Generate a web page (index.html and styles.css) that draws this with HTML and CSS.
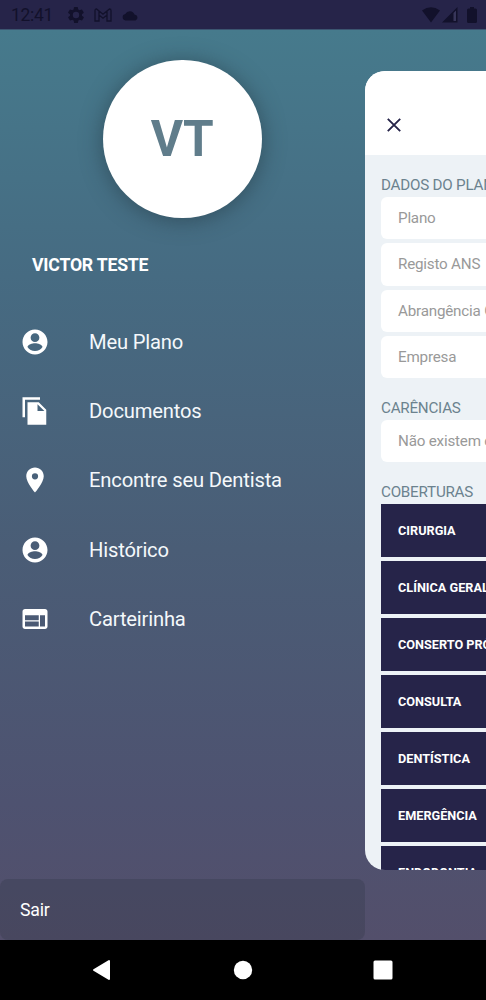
FILE: index.html
```html
<!DOCTYPE html>
<html lang="pt-BR">
<head>
<meta charset="utf-8">
<title>Meu Plano</title>
<link rel="stylesheet" href="styles.css">
</head>
<body>
<div class="phone">
  <header class="status">
    <span class="clock">12:41</span>
    <svg class="status-gear" viewBox="2 2 20 20"><path fill-rule="evenodd" d="M19.4 13a7.8 7.8 0 0 0 0-2l2.1-1.6c.2-.2.2-.4.1-.7l-2-3.4c-.1-.2-.4-.3-.6-.2l-2.5 1a7.500 7.500 0 0 0-1.700-1l-.4-2.600a.5.5 0 0 0-.5-.5h-4a.5.5 0 0 0-.5.5L9 5.100c-.6.200-1.200.6-1.700 1l-2.500-1c-.2-.1-.5 0-.6.2l-2 3.400c-.1.3-.1.5.1.7L4.500 11a7.800 7.800 0 0 0 0 2l-2.100 1.600c-.2.2-.2.400-.1.700l2 3.400c.1.200.4.300.6.200l2.500-1c.5.400 1.100.700 1.700 1l.4 2.600c0 .3.2.5.5.5h4c.3 0 .5-.2.500-.5l.4-2.600c.6-.3 1.200-.6 1.700-1l2.500 1c.2.100.5 0 .6-.2l2-3.400c.1-.2.1-.5-.1-.7zM12 16a4 4 0 1 1 0-8 4 4 0 0 1 0 8z"/></svg>
    <svg class="status-mail" viewBox="0 0 18 14"><path d="M1 13V2.500Q1 1 2.500 1L9 6.200 15.500 1Q17 1 17 2.500V13H13V7L9 10.200 5 7V13ZM5 3v4M13 3v4"/></svg>
    <svg class="status-cloud" viewBox="0 0 17 11"><path d="M3.500 10.500A3.300 3.300 0 0 1 3.300 4 5 5 0 0 1 12.500 4.500 3.100 3.100 0 0 1 13.500 10.500Z"/></svg>
    <div class="signals">
      <svg width="18" height="16" viewBox="0 0 18 16"><path d="M0 3.500Q9-2.800 18 3.500L9 15.500Z"/></svg>
      <svg width="16" height="16" viewBox="0 0 16 16"><path d="M0 15.500 15.500 0V15.500Z"/><path class="weak" d="M11.500 6 14 3.500V14H11.500Z"/></svg>
      <svg class="battery" width="10" height="16" viewBox="0 0 10 16"><path d="M3 0H7V1.500H8.500Q10 1.500 10 3V14.500Q10 16 8.500 16H1.500Q0 16 0 14.500V3Q0 1.500 1.500 1.500H3Z"/></svg>
    </div>
  </header>

  <main class="screen">
    <aside class="drawer">
      <div class="avatar">VT</div>
      <h1 class="name">VICTOR TESTE</h1>
      <nav class="menu">
        <a class="item"><svg viewBox="0 0 24 24"><path d="M12 2C6.480 2 2 6.480 2 12s4.480 10 10 10 10-4.480 10-10S17.520 2 12 2zm0 3c1.930 0 3.500 1.570 3.500 3.500S13.930 12 12 12s-3.500-1.570-3.500-3.500S10.070 5 12 5zm0 14.200c-2.500 0-4.710-1.280-6-3.220.03-1.990 4-3.080 6-3.080s5.970 1.090 6 3.080c-1.290 1.940-3.500 3.220-6 3.220z"/></svg><span>Meu Plano</span></a>
        <a class="item"><svg viewBox="0 0 24 24"><path d="M2 1H16V3H4V17H2ZM6 5H15L21 11V23H6ZM14 6.500V12H19.500Z"/></svg><span>Documentos</span></a>
        <a class="item"><svg viewBox="0 0 24 24"><path d="M12 2C8.130 2 5 5.130 5 9c0 5.250 7 13 7 13s7-7.750 7-13c0-3.870-3.130-7-7-7zm0 9.500a2.500 2.500 0 0 1 0-5 2.500 2.500 0 0 1 0 5z"/></svg><span>Encontre seu Dentista</span></a>
        <a class="item"><svg viewBox="0 0 24 24"><path d="M12 2C6.480 2 2 6.480 2 12s4.480 10 10 10 10-4.480 10-10S17.520 2 12 2zm0 3c1.930 0 3.500 1.570 3.500 3.500S13.930 12 12 12s-3.500-1.570-3.500-3.500S10.070 5 12 5zm0 14.200c-2.500 0-4.710-1.280-6-3.220.03-1.990 4-3.080 6-3.080s5.970 1.090 6 3.080c-1.290 1.940-3.500 3.220-6 3.220z"/></svg><span>Histórico</span></a>
        <a class="item"><svg viewBox="0 0 24 24"><path fill-rule="evenodd" d="M20 4H4c-1.100 0-1.990.9-1.990 2L2 18c0 1.100.9 2 2 2h16c1.100 0 2-.9 2-2V6c0-1.100-.9-2-2-2zm-5 14H4v-4h11v4zm0-5H4V9h11v4zm5 5h-4V9h4v9z"/></svg><span>Carteirinha</span></a>
      </nav>
      <a class="exit">Sair</a>
    </aside>

    <section class="panel">
      <div class="panel-head"><svg class="close" viewBox="0 0 14 14"><path d="M.8.8 13.200 13.200M13.200.8.8 13.200"/></svg></div>
      <div class="panel-body">
        <h2 class="title">DADOS DO PLANO</h2>
        <div class="fields">
          <div class="field">Plano</div>
          <div class="field">Registo ANS</div>
          <div class="field">Abrangência Geográfica</div>
          <div class="field">Empresa</div>
        </div>
        <h2 class="title">CARÊNCIAS</h2>
        <div class="fields"><div class="field">Não existem carências</div></div>
        <h2 class="title">COBERTURAS</h2>
        <div class="covers">
          <div class="cover">CIRURGIA</div>
          <div class="cover">CLÍNICA GERAL</div>
          <div class="cover">CONSERTO PRÓTESE</div>
          <div class="cover">CONSULTA</div>
          <div class="cover">DENTÍSTICA</div>
          <div class="cover">EMERGÊNCIA</div>
          <div class="cover">ENDODONTIA</div>
        </div>
      </div>
    </section>
  </main>

  <footer class="navbar">
    <svg width="20" height="22" viewBox="0 0 20 22"><path d="M17 2V20L2 11Z" stroke="#fff" stroke-width="2" stroke-linejoin="round"/></svg>
    <svg width="20" height="20" viewBox="0 0 20 20"><circle cx="10" cy="10" r="9.200"/></svg>
    <svg width="20" height="20" viewBox="0 0 20 20"><rect x=".5" y=".5" width="19" height="19" rx="1.500"/></svg>
  </footer>
</div>
</body>
</html>
```

FILE: styles.css
```css
* { box-sizing: border-box; }
body { margin: 0; font-family: Roboto, sans-serif; }
h1, h2 { margin: 0; }
svg { display: block; flex: none; }

.phone {
  width: 486px;
  height: 1000px;
  display: flex;
  flex-direction: column;
  overflow: hidden;
}

.status {
  height: 30px;
  flex: none;
  display: flex;
  align-items: center;
  padding: 1px 9px 0 11px;
  background: #262449;
  border-bottom: 1px solid #3c5570;
  color: #12112b;
  fill: #12112b;
}
.clock { width: 57px; font-size: 17.500px; letter-spacing: -0.3px; }
.status-gear { width: 16px; height: 16px; }
.status-mail { width: 18px; height: 14px; margin-left: 10px; fill: none; stroke: #12112b; stroke-width: 1.300; }
.status-cloud { width: 17px; height: 11px; margin-left: 10px; }
.signals { margin-left: auto; display: flex; gap: 2px; }
.battery { margin-left: 7px; }
.weak { fill: #38365a; }

.screen {
  height: 910px;
  flex: none;
  display: flex;
  background: linear-gradient(180deg, #467a8c 0%, #466b82 27%, #4a5d76 57%, #4e5270 85%, #534f6b 100%);
}

.drawer {
  width: 364.500px;
  flex: none;
  display: flex;
  flex-direction: column;
}
.avatar {
  width: 158.500px;
  height: 158.500px;
  margin: 29.500px 0 0 103px;
  flex: none;
  display: flex;
  align-items: center;
  justify-content: center;
  border-radius: 50%;
  background: #fff;
  box-shadow: 0 2px 20px 2px rgba(35, 55, 65, 0.5);
  color: #607d8b;
  font-size: 49.500px;
  font-weight: 700;
}
.name {
  margin: 35px 0 0 32px;
  height: 24px;
  line-height: 24px;
  color: #fff;
  font-size: 17.700px;
  letter-spacing: -0.22px;
  font-weight: 700;
}
.menu { margin-top: 30px; }
.item {
  height: 69.400px;
  display: flex;
  align-items: center;
  padding-left: 19.600px;
  color: #f4f8fb;
  font-size: 20.200px;
  letter-spacing: -0.18px;
}
.item svg { width: 30px; height: 30px; margin-right: 39.400px; fill: #fff; }
.exit {
  height: 61px;
  margin-top: auto;
  padding-left: 20px;
  line-height: 62.500px;
  border-radius: 8px;
  background: rgba(53, 57, 75, 0.35);
  color: #fff;
  font-size: 17.700px;
  letter-spacing: -0.2px;
}

.panel {
  flex: 1;
  min-width: 0;
  height: 799.500px;
  margin-top: 40.500px;
  border-radius: 20px 0 0 20px;
  overflow: hidden;
  background: #edf2f6;
  white-space: nowrap;
}
.panel-head { height: 84.500px; padding: 47.500px 0 0 22.500px; background: #fff; }
.close { width: 14px; height: 14px; fill: none; stroke: #262449; stroke-width: 1.900; }
.panel-body { padding: 20px 0 0 16.500px; }
.title {
  height: 22px;
  line-height: 20px;
  color: #6b828e;
  font-size: 15.200px;
  letter-spacing: -0.23px;
  font-weight: 400;
}
.fields { display: grid; gap: 4px; margin-bottom: 19.900px; }
.field {
  height: 42.300px;
  padding-left: 17px;
  line-height: 43px;
  border-radius: 6px 0 0 6px;
  background: #fff;
  color: #999;
  font-size: 15.200px;
  letter-spacing: -0.2px;
}
.covers { display: grid; gap: 4px; }
.cover {
  height: 52.900px;
  padding-left: 17px;
  line-height: 53px;
  background: #262449;
  color: #fff;
  font-size: 12.700px;
  font-weight: 700;
}

.navbar {
  height: 60px;
  flex: none;
  display: flex;
  align-items: center;
  justify-content: space-between;
  padding: 0 93px 0 92px;
  background: #000;
  fill: #fff;
}
```
